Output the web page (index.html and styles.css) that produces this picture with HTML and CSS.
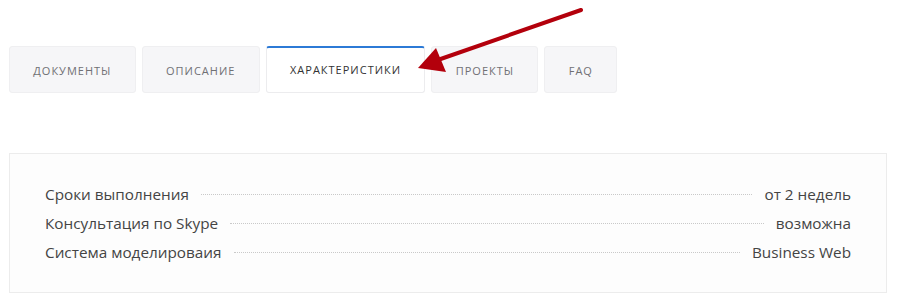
FILE: index.html
```html
<!DOCTYPE html>
<html lang="ru">
<head>
    <meta charset="UTF-8">
    <title>Характеристики</title>
    <link rel="stylesheet" href="styles.css">
</head>
<body>
    <div class="page">
        <nav class="tabs">
            <a class="tab" href="#">Документы</a>
            <a class="tab" href="#">Описание</a>
            <a class="tab active" href="#">Характеристики</a>
            <a class="tab" href="#">Проекты</a>
            <a class="tab" href="#">FAQ</a>
        </nav>
        <div class="specs">
            <div class="row"><span class="name">Сроки выполнения</span><span class="dots"></span><span class="value">от 2 недель</span></div>
            <div class="row"><span class="name">Консультация по Skype</span><span class="dots"></span><span class="value">возможна</span></div>
            <div class="row"><span class="name">Система моделироваия</span><span class="dots"></span><span class="value">Business Web</span></div>
        </div>
        <svg class="arrow" width="200" height="90" viewBox="0 0 200 90">
            <line x1="181" y1="10" x2="32" y2="62" stroke="#b3000c" stroke-width="4" stroke-linecap="round"/>
            <polygon points="18,68 36,48 46,72" fill="#b3000c"/>
        </svg>
    </div>
</body>
</html>
```

FILE: styles.css
```css
body { margin: 0; background: #fff; font-family: "Open Sans", "Noto Sans", sans-serif; color: #444; }
.page { position: relative; padding: 46px 15px 13px 9px; }
.tabs { display: flex; gap: 6px; }
.tab { display: block; height: 47px; line-height: 47px; padding: 0 23.3px; box-sizing: border-box; background: #f6f6f8; border: 1px solid #efeff1; border-radius: 3px; font-size: 11px; letter-spacing: 1px; text-transform: uppercase; color: #707074; text-decoration: none; }
.tab.active { background: #fff; border-color: #ececee; border-top: 2px solid #2c7ad6; line-height: 44px; color: #333; }
.specs { margin-top: 60px; border: 1px solid #ececec; background: #fdfdfd; padding: 25px 35px 26px 35px; font-size: 15.3px; }
.row { display: flex; align-items: center; height: 29px; }
.name, .value { white-space: nowrap; }
.dots { flex: 1; margin: 2px 12px 0; border-bottom: 1px dotted #c9c9c9; }
.arrow { position: absolute; left: 400px; top: 0; }
```
